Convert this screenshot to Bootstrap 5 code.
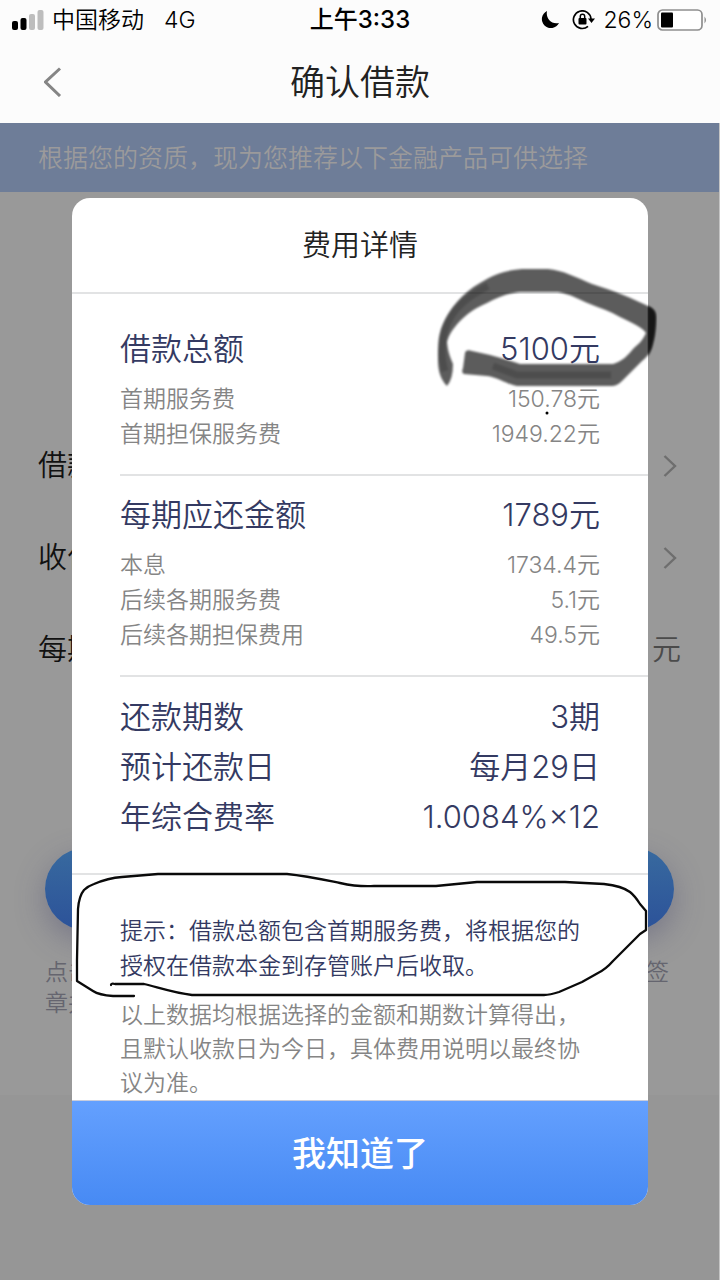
<!DOCTYPE html>
<html lang="zh-CN">
<head>
<meta charset="utf-8">
<meta name="viewport" content="width=device-width, initial-scale=1">
<title>确认借款</title>
<link href="https://cdn.jsdelivr.net/npm/bootstrap@5.3.0/dist/css/bootstrap.min.css" rel="stylesheet">
<style>
  body { font-family: Inter, "Noto Sans CJK SC", sans-serif; font-weight: 350; background: #969696; color: #222; }
  .top-area { background: #fcfcfc; }
  .status-bar { height: 40px; font-size: 23px; line-height: 40px; color: #000; }
  .status-bar .clock { font-weight: 500; font-size: 24px; }
  .status-bar .side { flex: 1 1 0; }
  .title-bar { height: 83px; padding: 0 40px; }
  .title-bar h1 { font-size: 35px; font-weight: 350; line-height: 40px; }
  .title-bar .side { width: 40px; }
  .stage { min-height: calc(100vh - 123px); border-right: 1px solid #c4c4c4; }
  .page-area { background: #999; padding-bottom: 76px; }
  .notice { background: #6e7d98; color: #9b9a9b; font-size: 25px; line-height: 67px; padding: 2px 0 0 38px; }
  .loan-rows { padding: 228px 38px 152px; }
  .loan-row { height: 92px; font-size: 29px; color: #111; padding-right: 4px; }
  .loan-row .unit { color: #4b4b4b; }
  .confirm { padding: 0 45px; }
  .confirm-btn { height: 82px; border-radius: 41px; background: linear-gradient(#386a9f, #2c5299); box-shadow: 0 10px 30px rgba(70, 70, 110, .4); }
  .terms { color: #65656f; font-size: 23px; line-height: 31px; margin: 27px 5px 0 0; }
  .overlay { inset: 75px -1px auto 0; }
  .dialog-box { width: 80%; border-radius: 18px; background: #fff; }
  .dialog-head { height: 96px; border-bottom: 2px solid #e2e3e4; font-size: 29px; line-height: 96px; font-weight: 350; }
  .fee-group { margin-left: 48px; padding: 14px 48px 22px 0; border-bottom: 2px solid #e2e3e4; }
  .fee-group.first { padding-top: 30px; }
  .fee-group.last { margin-left: 0; padding: 15px 48px 31px; }
  .fee-main { font-size: 31px; line-height: 50px; color: #343a62; }
  .fee-list { padding-top: 8px; }
  .fee-sub { font-size: 23px; line-height: 35px; color: #858585; }
  .hints { padding: 39px 48px 0; font-size: 23px; }
  .hint-main { color: #343a62; line-height: 35px; margin-bottom: 14px; }
  .hint-more { color: #858585; line-height: 34px; margin: 0; }
  .ok-btn { height: 105px; border-top: 1px solid #c8cddd; border-radius: 0 0 18px 18px; background: linear-gradient(#64a0fe, #478af4); color: #fff; font-size: 34px; font-weight: 500; }
  .ink { inset: 0; overflow: visible; pointer-events: none; }
</style>
</head>
<body>
<header class="top-area">
  <div class="status-bar d-flex">
    <div class="side d-flex align-items-center ps-2 ms-1">
      <svg width="32" height="20" viewBox="0 0 32 20" class="me-2" aria-hidden="true"><rect y="11" width="6" height="9" rx="2"/><rect x="8.500" y="8" width="6" height="12" rx="2"/><rect x="17" y="4" width="6" height="16" rx="2" fill="#bdbdbd"/><rect x="25.500" y="0" width="6" height="20" rx="2" fill="#bdbdbd"/></svg>
      <span>中国移动</span><span class="ps-3 ms-1">4G</span>
    </div>
    <div class="clock">上午3:33</div>
    <div class="side d-flex align-items-center justify-content-end pe-2 me-1">
      <svg width="20" height="20" viewBox="0 0 20 20" class="me-2" aria-hidden="true"><path d="M7 1C5.500 8 11 15 19 13A9 9 0 1 1 7 1Z"/></svg>
      <svg width="24" height="20" viewBox="0 0 24 20" class="ms-1" aria-hidden="true"><path d="M19 9A8.800 8.800 0 1 0 16 16.300" fill="none" stroke="#000" stroke-width="1.700"/><path d="M16 8.500h7l-3.500 4.500z"/><rect x="6.500" y="8" width="8" height="6.500" rx="1"/><path d="M8.300 9V6.500a2.200 2.200 0 0 1 4.400 0V9" fill="none" stroke="#000" stroke-width="1.500"/></svg>
      <span class="ps-2 pe-1">26%</span>
      <svg width="51" height="22" viewBox="0 0 51 22" aria-hidden="true"><rect x="1" y="1" width="44" height="20" rx="4.500" fill="#fff" stroke="#8e8e8e" stroke-width="1.700"/><rect x="4" y="3.500" width="12" height="15" rx="1"/><path d="M47.500 7.500q3 3.500 0 7z" fill="#8e8e8e"/></svg>
    </div>
  </div>
  <nav class="title-bar d-flex align-items-center justify-content-between">
    <a href="#" class="side d-flex" aria-label="返回"><svg width="22" height="30" viewBox="0 0 22 30" class="ms-1"><path d="M16 1.500 1.500 15 16 29" fill="none" stroke="#858585" stroke-width="3"/></svg></a>
    <h1 class="m-0">确认借款</h1>
    <span class="side"></span>
  </nav>
</header>
<main class="stage position-relative">
  <div class="page-area">
    <div class="notice text-nowrap overflow-hidden">根据您的资质，现为您推荐以下金融产品可供选择</div>
    <div class="loan-rows">
      <div class="loan-row d-flex align-items-center justify-content-between"><span>借款</span><svg width="14" height="22" viewBox="0 0 14 22" aria-hidden="true"><path d="m1.500 1 10.500 10-10.500 10" fill="none" stroke="#6e6e6e" stroke-width="2.400"/></svg></div>
      <div class="loan-row d-flex align-items-center justify-content-between"><span>收付</span><svg width="14" height="22" viewBox="0 0 14 22" aria-hidden="true"><path d="m1.500 1 10.500 10-10.500 10" fill="none" stroke="#6e6e6e" stroke-width="2.400"/></svg></div>
      <div class="loan-row d-flex align-items-center justify-content-between pe-0"><span>每期</span><span class="unit">元</span></div>
    </div>
    <div class="confirm">
      <button type="button" class="confirm-btn border-0 w-100 d-block" aria-label="确认借款"></button>
      <div class="terms">
        <div class="d-flex justify-content-between"><span>点击</span><span>签</span></div>
        <div>章并</div>
      </div>
    </div>
  </div>

  <div class="overlay position-absolute">
    <section class="dialog-box position-relative mx-auto" role="dialog" aria-labelledby="fee-title">
      <h2 class="dialog-head text-center m-0" id="fee-title">费用详情</h2>
      <div class="fee-group first">
        <div class="fee-main d-flex justify-content-between"><span>借款总额</span><span>5100元</span></div>
        <div class="fee-list">
          <div class="fee-sub d-flex justify-content-between"><span>首期服务费</span><span>150.78元</span></div>
          <div class="fee-sub d-flex justify-content-between"><span>首期担保服务费</span><span>1949.22元</span></div>
        </div>
      </div>
      <div class="fee-group">
        <div class="fee-main d-flex justify-content-between"><span>每期应还金额</span><span>1789元</span></div>
        <div class="fee-list">
          <div class="fee-sub d-flex justify-content-between"><span>本息</span><span>1734.4元</span></div>
          <div class="fee-sub d-flex justify-content-between"><span>后续各期服务费</span><span>5.1元</span></div>
          <div class="fee-sub d-flex justify-content-between"><span>后续各期担保费用</span><span>49.5元</span></div>
        </div>
      </div>
      <div class="fee-group last">
        <div class="fee-main d-flex justify-content-between"><span>还款期数</span><span>3期</span></div>
        <div class="fee-main d-flex justify-content-between"><span>预计还款日</span><span>每月29日</span></div>
        <div class="fee-main d-flex justify-content-between"><span>年综合费率</span><span>1.0084%×12</span></div>
      </div>
      <div class="hints">
        <p class="hint-main">提示：借款总额包含首期服务费，将根据您的授权在借款本金到存管账户后收取。</p>
        <p class="hint-more">以上数据均根据选择的金额和期数计算得出，且默认收款日为今日，具体费用说明以最终协议为准。</p>
      </div>
      <button type="button" class="ok-btn w-100 d-block border-start-0 border-end-0 border-bottom-0">我知道了</button>

      <!-- hand-drawn marks over the dialog -->
      <svg class="ink position-absolute w-100 h-100" viewBox="72 198 576 1007" aria-hidden="true">
        <defs><filter id="soft" x="-5%" y="-5%" width="110%" height="110%"><feGaussianBlur stdDeviation="0.8"/></filter></defs>
        <path filter="url(#soft)" fill="#000" fill-opacity=".64" d="M447 386C441 380 438 372 438 360C438 348 438 338 441 329C445 318 450 310 457 302C463 295 471 288 480 283C493 275 506 270 522 269H548C562 270 578 278 592 284C612 290 634 299 650 307C654 309 656 312 656 317C656 328 655 336 653 343C651 352 648 356 642 361L622 381C618 385 615 386 611 386H517C506 384 497 377 487 376L464 374Q461 373 463 368L465 353Q466 349 472 351L490 355Q505 359 520 364H613C623 361 628 355 633 349C637 345 642 342 646 333C643 328 631 322 620 317C610 311 600 308 590 304C580 300 570 294 558 292H520C508 293 496 298 487 303C475 308 467 314 460 321C453 329 449 334 447 342C448 353 451 359 453 364Q453 379 447 386Z"/>
        <path filter="url(#soft)" fill="#000" fill-opacity=".6" d="M648 306Q656 309 656 318Q655 345 648 356V329Z"/>
        <path filter="url(#soft)" fill="none" stroke="#000" stroke-opacity=".16" stroke-width="7" d="M488 286C460 300 447 316 443 338C441 354 442 362 445 371M493 366L517 375H611"/>
        <circle cx="547" cy="413" r="1.500"/>
        <path fill="none" stroke="#0a0a0a" stroke-width="2.300" stroke-linecap="round" stroke-linejoin="round" d="M134 996H113Q99 995 93 991L77 981V960L78 909Q79 896 84 890Q88 886 94 884Q108 878 122 877L158 874H287C307 876 325 880 340 883Q358 887 374 886H436L477 882H565L604 884Q622 886 630 892Q635 896 640 904L646 911V930L640 934L613 961Q606 969 598 973L582 982L559 992Q550 995 544 995H192C174 993 157 987 144 984H115Q111 983 111 985"/>
      </svg>
    </section>
  </div>
</main>
<script src="https://cdn.jsdelivr.net/npm/bootstrap@5.3.0/dist/js/bootstrap.bundle.min.js"></script>
</body>
</html>
